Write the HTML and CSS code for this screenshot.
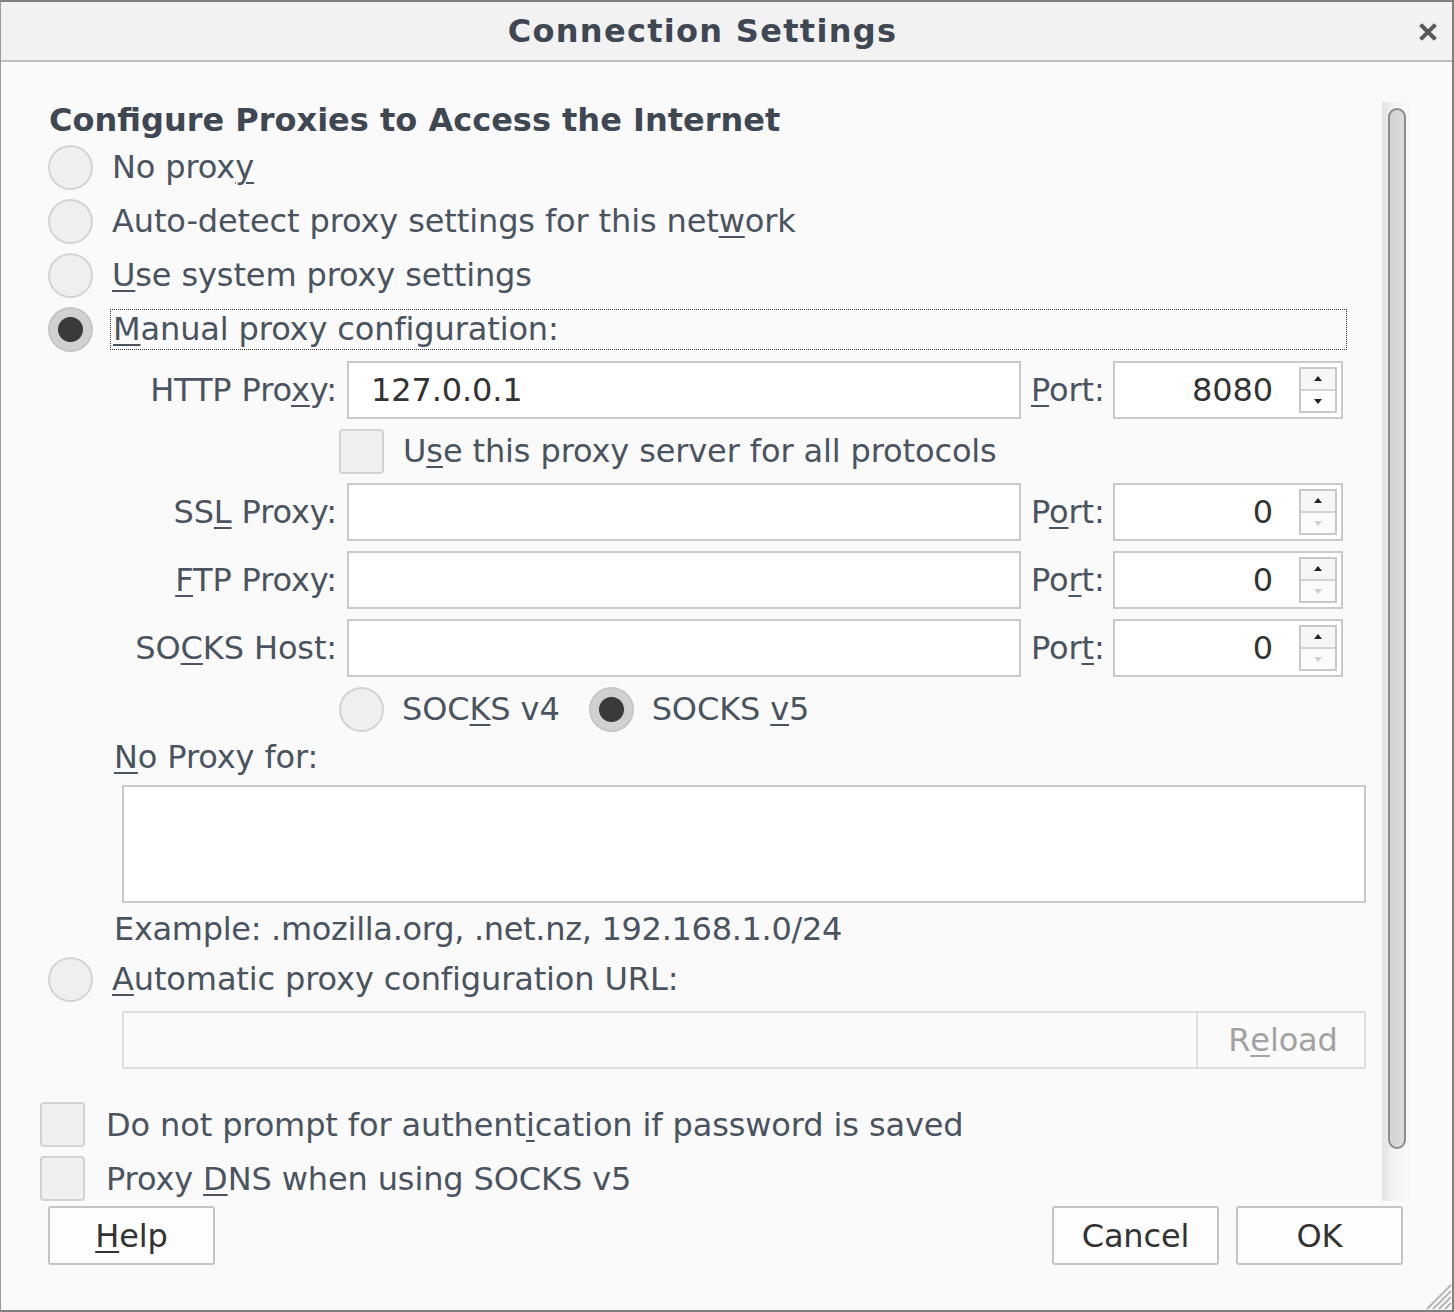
FILE: index.html
```html
<!DOCTYPE html>
<html>
<head>
<meta charset="utf-8">
<link rel="stylesheet" href="styles.css">
</head>
<body>
<div class="window">
  <div class="titlebar">
    <div class="title">Connection Settings</div>
    <svg class="close" width="18" height="18" viewBox="0 0 18 18"><path d="M3 3 L15 15 M15 3 L3 15" stroke="#5a5a5a" stroke-width="4" stroke-linecap="square"/></svg>
  </div>
  <div class="body">
    <div class="main">
      <div class="heading">Configure Proxies to Access the Internet</div>
      <div class="radio-row"><span class="radio"></span><span class="lbl">No prox<u>y</u></span></div>
      <div class="radio-row"><span class="radio"></span><span class="lbl">Auto-detect proxy settings for this net<u>w</u>ork</span></div>
      <div class="radio-row"><span class="radio"></span><span class="lbl"><u>U</u>se system proxy settings</span></div>
      <div class="radio-row"><span class="radio checked"></span><span class="lbl focus"><u>M</u>anual proxy configuration:</span></div>

      <div class="proxy-grid">
        <div class="plabel">HTTP Pro<u>x</u>y:</div>
        <div class="input"><span class="val">127.0.0.1</span></div>
        <div class="portlabel"><u>P</u>ort:</div>
        <div class="spin"><span class="num">8080</span><span class="spinbtns"><span class="up"></span><span class="down"></span></span></div>

        <div class="check-row span"><span class="check"></span><span class="lbl">U<u>s</u>e this proxy server for all protocols</span></div>

        <div class="plabel">SS<u>L</u> Proxy:</div>
        <div class="input"></div>
        <div class="portlabel">P<u>o</u>rt:</div>
        <div class="spin"><span class="num">0</span><span class="spinbtns"><span class="up"></span><span class="down off"></span></span></div>

        <div class="plabel"><u>F</u>TP Proxy:</div>
        <div class="input"></div>
        <div class="portlabel">Po<u>r</u>t:</div>
        <div class="spin"><span class="num">0</span><span class="spinbtns"><span class="up"></span><span class="down off"></span></span></div>

        <div class="plabel">SO<u>C</u>KS Host:</div>
        <div class="input"></div>
        <div class="portlabel">Por<u>t</u>:</div>
        <div class="spin"><span class="num">0</span><span class="spinbtns"><span class="up"></span><span class="down off"></span></span></div>
      </div>

      <div class="socks-row">
        <span class="radio"></span><span class="lbl">SOC<u>K</u>S v4</span>
        <span class="radio checked v5"></span><span class="lbl">SOCKS <u>v</u>5</span>
      </div>

      <div class="noproxy-label"><u>N</u>o Proxy for:</div>
      <div class="textarea"></div>
      <div class="example">Example: .mozilla.org, .net.nz, 192.168.1.0/24</div>

      <div class="radio-row auto"><span class="radio"></span><span class="lbl"><u>A</u>utomatic proxy configuration URL:</span></div>
      <div class="url-row">
        <div class="url-input"></div>
        <div class="reload">R<u>e</u>load</div>
      </div>

      <div class="bottom-check first"><span class="check"></span><span class="lbl">Do not prompt for authent<u>i</u>cation if password is saved</span></div>
      <div class="bottom-check"><span class="check"></span><span class="lbl">Proxy <u>D</u>NS when using SOCKS v5</span></div>
    </div>
    <div class="scrollbar"><div class="thumb"></div></div>
  </div>
  <div class="footer">
    <div class="btn"><u>H</u>elp</div>
    <div class="spacer"></div>
    <div class="btn">Cancel</div>
    <div class="btn">OK</div>
  </div>
  <svg class="grip" width="28" height="28" viewBox="0 0 28 28"><path d="M27 9 L9 27 M27 15 L15 27 M27 21 L21 27 M27 3 L3 27" stroke="#b5b5b5" stroke-width="2"/></svg>
</div>
</body>
</html>
```

FILE: styles.css
```css
* { box-sizing: border-box; }
html, body { margin: 0; padding: 0; background: #fafafa; }
body {
  font-family: "DejaVu Sans", "Liberation Sans", sans-serif;
  font-size: 32px;
  color: #4a5360;
  letter-spacing: -0.12px;
}
u {
  text-decoration: underline;
  text-decoration-thickness: 2px;
  text-underline-offset: 4px;
}
.window {
  position: relative;
  width: 1454px;
  height: 1312px;
  border-top: 2px solid #7f7f7f;
  border-right: 2px solid #7f7f7f;
  border-bottom: 2px solid #7f7f7f;
  border-left: 1px solid #9a9a9a;
  background: #fafafa;
  display: flex;
  flex-direction: column;
}
.titlebar {
  height: 60px;
  background: #f2f2f2;
  border-bottom: 2px solid #bdbdbd;
  display: flex;
  align-items: center;
  position: relative;
  flex: none;
}
.title {
  flex: 1;
  text-align: center;
  padding-right: 48px;
  font-weight: bold;
  font-size: 32px;
  color: #3f4753;
  letter-spacing: 1.3px;
}
.close {
  position: absolute;
  right: 15px;
  top: 21px;
}
.body {
  height: 1140px;
  display: flex;
  flex: none;
}
.main {
  flex: 1;
  padding-left: 47px;
  display: flex;
  flex-direction: column;
}
.heading {
  margin-top: 38px;
  margin-left: 1px;
  height: 40px;
  line-height: 40px;
  font-weight: bold;
  font-size: 32px;
  color: #3f4753;
  letter-spacing: 0;
}
.radio-row {
  height: 54px;
  display: flex;
  align-items: center;
}
.radio {
  width: 45px;
  height: 45px;
  border-radius: 50%;
  border: 2px solid #d4d4d4;
  background: #efefef;
  flex: none;
}
.radio.checked {
  border-color: #c6c6c6;
  background: radial-gradient(circle, #3a3a3a 0, #3a3a3a 12px, #cfcfcf 13px, #d6d6d6 100%);
}
.radio-row .lbl { margin-left: 19px; line-height: 38px; }
.radio-row .lbl.focus {
  flex: 1;
  margin-left: 17px;
  margin-right: 35px;
  padding-left: 2px;
  border: 1px dotted #3a3a3a;
  height: 41px;
  line-height: 38px;
}
.proxy-grid {
  margin-top: 5px;
  margin-left: 74px;
  display: grid;
  grid-template-columns: 215px 674px 72px 230px;
  grid-template-rows: 58px 44px 58px 58px 58px;
  column-gap: 10px;
  row-gap: 10px;
  align-items: center;
}
.plabel { text-align: right; }
.portlabel { text-align: left; }
.input {
  height: 58px;
  background: #fff;
  border: 2px solid #cacaca;
  display: flex;
  align-items: center;
  padding-left: 22px;
  color: #333;
}
.spin {
  height: 58px;
  background: #fff;
  border: 2px solid #cacaca;
  display: flex;
  align-items: center;
  justify-content: flex-end;
  padding-right: 4px;
  color: #333;
}
.spin .num { margin-right: 26px; }
.spinbtns {
  width: 38px;
  height: 46px;
  border: 2px solid #c8c8c8;
  display: flex;
  flex-direction: column;
}
.spinbtns span {
  flex: 1;
  position: relative;
}
.spinbtns .up { background: #f6f6f6; border-bottom: 2px solid #d4d4d4; }
.spinbtns .up::after, .spinbtns .down::after {
  content: "";
  position: absolute;
  left: 50%;
  top: 50%;
  margin-left: -4px;
  border-left: 4px solid transparent;
  border-right: 4px solid transparent;
}
.spinbtns .up::after { border-bottom: 5px solid #222; margin-top: -3px; }
.spinbtns .down::after { border-top: 5px solid #222; margin-top: -2px; }
.spinbtns .down.off { background: #fbfbfb; }
.spinbtns .down.off::after { border-top-color: #cfcfcf; }
.check-row {
  grid-column: 2 / 5;
  margin-left: -8px;
  display: flex;
  align-items: center;
  height: 44px;
}
.check {
  width: 45px;
  height: 45px;
  border: 2px solid #d2d2d2;
  border-radius: 4px;
  background: #f0f0f0;
  flex: none;
}
.check-row .lbl { margin-left: 19px; }
.socks-row {
  margin-top: 10px;
  margin-left: 291px;
  height: 44px;
  display: flex;
  align-items: center;
}
.socks-row .lbl { margin-left: 18px; }
.socks-row .v5 { margin-left: 29px; }
.noproxy-label {
  margin-top: 7px;
  margin-left: 66px;
  height: 38px;
  line-height: 38px;
}
.textarea {
  margin-top: 9px;
  margin-left: 74px;
  width: 1244px;
  height: 118px;
  background: #fff;
  border: 2px solid #c8c8c8;
}
.example {
  margin-top: 7px;
  margin-left: 66px;
  height: 38px;
  line-height: 38px;
  letter-spacing: -0.3px;
}
.radio-row.auto { margin-top: 4px; }
.url-row {
  margin-top: 5px;
  margin-left: 74px;
  width: 1244px;
  height: 58px;
  display: flex;
  border: 2px solid #dedede;
  border-radius: 3px;
}
.url-input { flex: 1; background: #fafafa; }
.reload {
  width: 168px;
  border-left: 2px solid #e0e0e0;
  display: flex;
  align-items: center;
  justify-content: center;
  padding-left: 4px;
  color: #a2a2a2;
}
.bottom-check {
  margin-left: -8px;
  height: 45px;
  display: flex;
  align-items: center;
  margin-top: 9px;
}
.bottom-check.first { margin-top: 33px; }
.bottom-check .lbl { margin-left: 21px; }
.scrollbar {
  width: 28px;
  margin-top: 40px;
  margin-bottom: 1px;
  margin-right: 42px;
  background: linear-gradient(to right, #e2e2e2, #f3f3f3 40%, #f9f9f9);
  padding: 6px 0 0 6px;
}
.thumb {
  width: 18px;
  height: 1041px;
  border: 2px solid #8c8c8c;
  border-radius: 9px;
  background: linear-gradient(to right, #d4d4d4, #dcdcdc);
}
.footer {
  display: flex;
  padding: 4px 49px 0 47px;
  gap: 17px;
}
.spacer { flex: 1; }
.btn {
  width: 167px;
  height: 59px;
  border: 2px solid #c4c4c4;
  border-radius: 3px;
  background: #fdfdfd;
  color: #333;
  display: flex;
  align-items: center;
  justify-content: center;
}
.grip {
  position: absolute;
  right: 0;
  bottom: 0;
}
```
